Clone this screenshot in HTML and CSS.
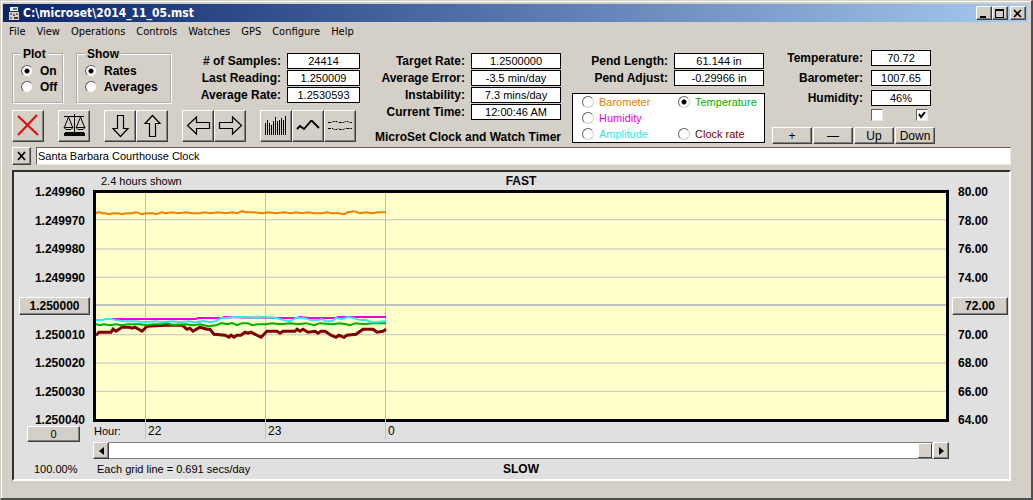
FILE: index.html
```html
<!DOCTYPE html>
<html lang="en">
<head>
    <meta charset="utf-8">
    <title>C:\microset\2014_11_05.mst</title>
    <meta name="viewport" content="width=device-width, initial-scale=1.0">
    <link rel="stylesheet" href="styles.css">
</head>
<body>
    <div class="window">
        <header class="titlebar">
            <svg class="app-icon" width="10" height="14" viewBox="0 0 10 14">
                <rect width="10" height="14" fill="#1c2c3c"/>
                <rect x="1" y="1" width="8" height="4" fill="#e8f4f8"/>
                <rect x="4" y="2" width="4" height="2" fill="#3c8c8c"/>
                <path d="M0 6h10v8H0z" fill="#d8d4c8"/>
                <path d="M1 7h2v2H1zM7 7h2v2H7zM1 11h2v2H1z" fill="#807868"/>
                <path d="M4 8h2v2H4z" fill="#c04030"/>
                <path d="M5 11h4v2H5z" fill="#403c38"/>
            </svg>
            <h1>C:\microset\2014_11_05.mst</h1>
            <div class="window-buttons">
                <button type="button" aria-label="Minimize"><svg width="12" height="11" viewBox="0 0 12 11"><path d="M2 8h6v2H2z"/></svg></button>
                <button type="button" aria-label="Maximize"><svg width="12" height="11" viewBox="0 0 12 11"><path d="M1 1h9v9H1zM2 3v6h7V3z" fill-rule="evenodd"/></svg></button>
                <button type="button" class="close" aria-label="Close"><svg width="12" height="11" viewBox="0 0 12 11"><path d="M2 2l7 7M9 2l-7 7" stroke="#000" stroke-width="1.6"/></svg></button>
            </div>
        </header>

        <nav class="menu">
            <a href="#">File</a>
            <a href="#">View</a>
            <a href="#">Operations</a>
            <a href="#">Controls</a>
            <a href="#">Watches</a>
            <a href="#">GPS</a>
            <a href="#">Configure</a>
            <a href="#">Help</a>
        </nav>

        <div class="controls">
            <div class="group group-main">
                <div class="group-row">
                    <fieldset class="plot-set">
                        <legend>Plot</legend>
                        <label><input type="radio" name="plot" checked>On</label>
                        <label><input type="radio" name="plot">Off</label>
                    </fieldset>
                    <fieldset class="show-set">
                        <legend>Show</legend>
                        <label><input type="radio" name="show" checked>Rates</label>
                        <label><input type="radio" name="show">Averages</label>
                    </fieldset>
                    <div class="readouts">
                        <label for="samples"># of Samples:</label><output id="samples">24414</output>
                        <label for="last">Last Reading:</label><output id="last">1.250009</output>
                        <label for="avgrate">Average Rate:</label><output id="avgrate">1.2530593</output>
                    </div>
                </div>
                <div class="toolbar">
                    <div class="tools">
                        <button type="button" aria-label="Clear"><svg width="28" height="28" viewBox="0 0 28 28"><path d="M4 4l20 19M23 3L4 23" fill="none" stroke="#e01010" stroke-width="2.2"/></svg></button>
                    </div>
                    <div class="tools">
                        <button type="button" aria-label="Balance"><svg width="28" height="28" viewBox="0 0 28 28"><path d="M4 4.500h20M14.500 2v18M8.500 5l-4 10M8.500 5l4 10M20.500 5l-4 10M20.500 5l4 10" fill="none" stroke="#000"/><path d="M4 15.500h9l-2 2H6zM16 15.500h9l-2 2h-5z" fill="none" stroke="#000"/><path d="M5 20h19v1h1v3H4v-3h1z"/></svg></button>
                    </div>
                    <div class="tools">
                        <button type="button" aria-label="Scale down"><svg width="28" height="28" viewBox="0 0 28 28"><path d="M11.500 3.500h6v13h4.500L14.500 24.500 7 16.500h4.500z" fill="none" stroke="#000" stroke-width="1.2"/></svg></button>
                        <button type="button" aria-label="Scale up"><svg width="28" height="28" viewBox="0 0 28 28"><path d="M11.500 24.500h6v-13h4.500L14.500 3.500 7 11.500h4.500z" fill="none" stroke="#000" stroke-width="1.2"/></svg></button>
                    </div>
                    <div class="tools">
                        <button type="button" aria-label="Back"><svg width="28" height="28" viewBox="0 0 28 28"><path d="M25.500 10.500v6h-13V22L3.500 13.500 12.500 5v5.500z" fill="none" stroke="#000" stroke-width="1.2"/></svg></button>
                        <button type="button" aria-label="Forward"><svg width="28" height="28" viewBox="0 0 28 28"><path d="M3.500 10.500v6h13V22l9-8.500L16.500 5v5.500z" fill="none" stroke="#000" stroke-width="1.2"/></svg></button>
                    </div>
                    <div class="tools">
                        <button type="button" aria-label="Bars"><svg width="28" height="28" viewBox="0 0 28 28"><path d="M3.500 23V11M5.500 23V8M7.500 23V11M9.500 23V13M11.500 23V9M13.500 23V5M15.500 23V9M17.500 23V8M19.500 23V6M21.500 23V8M23.500 23V4" stroke="#000"/></svg></button>
                        <button type="button" aria-label="Line"><svg width="28" height="28" viewBox="0 0 28 28"><path d="M3 17l3-3 4 3 7-8 1 0 7 7" fill="none" stroke="#000" stroke-width="1.8"/></svg></button>
                        <button type="button" aria-label="Traces"><svg width="28" height="28" viewBox="0 0 28 28"><path d="M2 10.500h4l1-1h4l1 1h6l1-1h3l1 1h3M2 16.500h5l1 1h3l1-1 2 1h4l1-1h7" fill="none" stroke="#000" stroke-dasharray="3 1"/></svg></button>
                    </div>
                </div>
            </div>

            <div class="group group-rate">
                <div class="readouts">
                    <label for="target">Target Rate:</label><output id="target">1.2500000</output>
                    <label for="error">Average Error:</label><output id="error">-3.5 min/day</output>
                    <label for="instability">Instability:</label><output id="instability">7.3 mins/day</output>
                    <label for="time">Current Time:</label><output id="time">12:00:46 AM</output>
                </div>
                <strong class="product">MicroSet Clock and Watch Timer</strong>
            </div>

            <div class="group group-pend">
                <div class="readouts">
                    <label for="length">Pend Length:</label><output id="length">61.144 in</output>
                    <label for="adjust">Pend Adjust:</label><output id="adjust">-0.29966 in</output>
                </div>
                <div class="series-picker">
                    <label class="barometer"><input type="radio" name="series">Barometer</label>
                    <label class="temperature"><input type="radio" name="series" checked>Temperature</label>
                    <label class="humidity"><input type="radio" name="series">Humidity</label>
                    <label class="amplitude"><input type="radio" name="series">Amplitude</label>
                    <label class="clock-rate"><input type="radio" name="series">Clock rate</label>
                </div>
            </div>

            <div class="group group-weather">
                <div class="readouts">
                    <label for="temp">Temperature:</label><output id="temp">70.72</output>
                    <label for="baro">Barometer:</label><output id="baro">1007.65</output>
                    <label for="humid">Humidity:</label><output id="humid">46%</output>
                </div>
                <div class="checks">
                    <input type="checkbox" aria-label="Scale up">
                    <input type="checkbox" aria-label="Scale down" checked>
                </div>
                <div class="scale-buttons">
                    <button type="button">+</button>
                    <button type="button">—</button>
                    <button type="button">Up</button>
                    <button type="button">Down</button>
                </div>
            </div>
        </div>

        <div class="note">
            <button type="button" aria-label="Clear note"><svg width="10" height="10" viewBox="0 0 10 10"><path d="M1 1l7 8M8 1L1 9" stroke="#000" stroke-width="1.8"/></svg></button>
            <input type="text" aria-label="Note" value="Santa Barbara Courthouse Clock">
        </div>

        <main class="chart">
            <div class="chart-head">
                <span>2.4 hours shown</span>
                <strong>FAST</strong>
            </div>

            <div class="axis axis-left">
                <span>1.249960</span>
                <span>1.249970</span>
                <span>1.249980</span>
                <span>1.249990</span>
                <button type="button">1.250000</button>
                <span>1.250010</span>
                <span>1.250020</span>
                <span>1.250030</span>
                <span>1.250040</span>
            </div>

            <div class="plot">
                <svg viewBox="0 0 850 224" preserveAspectRatio="none">
                    <g class="grid">
                        <path d="M0 26.500H850M0 55.500H850M0 83.500H850M0 140.500H850M0 168.500H850M0 196.500H850"/>
                        <path d="M49.500 0V224M169.500 0V224M289.500 0V224"/>
                        <path class="mid" d="M0 111H850"/>
                    </g>
                    <polyline class="trace barometer" points="0,20 3,19 6,20 10,20 13,21 17,20 22,20 26,21 30,20 36,20 40,19 46,21 50,20 57,20 60,21 66,19 70,20 76,19 82,20 90,19 96,20 104,20 109,19 114,20 122,19 130,20 136,19 141,20 146,18 150,19 158,19 166,20 172,19 180,20 188,19 195,20 200,19 206,20 212,19 218,20 226,20 231,19 236,20 243,20 248,21 252,19 258,18 264,20 270,19 276,20 282,19 290,19"/>
                    <polyline class="trace humidity" points="16,125 30,125 60,125 100,125 102,124 126,124 128,123 186,124 200,124 204,123 214,124 240,124 242,123 290,123"/>
                    <polyline class="trace clock-rate" points="0,141 3,138 15,138 17,135 20,137 26,133 33,133 36,134 39,133 46,137 48,135 51,132 69,131 86,131 91,135 94,134 97,137 104,133 111,135 114,135 118,140 129,141 133,143 135,141 138,143 141,141 145,141 149,138 152,139 155,138 161,141 165,143 171,137 181,137 184,139 187,137 199,137 201,135 204,137 207,135 212,138 219,137 222,139 225,137 229,137 235,141 240,143 243,141 248,143 251,141 260,140 267,135 277,135 281,138 287,137 290,135"/>
                    <polyline class="trace temperature" points="0,130 4,131 8,130 14,131 20,130 26,131 32,130 44,130 50,131 58,130 66,130 71,129 76,131 90,130 97,131 104,130 112,132 120,131 126,129 131,130 136,129 141,131 146,129 152,129 156,131 162,130 170,130 176,129 184,130 194,129 202,130 210,129 218,131 224,129 236,130 244,129 250,130 254,131 260,129 268,130 276,129 290,129"/>
                    <polyline class="trace amplitude" points="0,126 6,126 10,125 15,125 20,126 28,127 40,127 48,128 60,127 66,128 76,127 84,128 92,127 100,128 108,127 114,128 120,127 125,124 131,124 136,123 150,123 160,124 166,123 180,124 188,126 194,127 200,124 208,124 215,126 222,126 226,125 230,127 236,127 240,124 246,125 252,123 258,124 264,126 270,126 276,128 290,127"/>
                </svg>
            </div>

            <div class="axis axis-right">
                <span>80.00</span>
                <span>78.00</span>
                <span>76.00</span>
                <span>74.00</span>
                <button type="button">72.00</button>
                <span>70.00</span>
                <span>68.00</span>
                <span>66.00</span>
                <span>64.00</span>
            </div>

            <button type="button" class="zero">0</button>
            <div class="hours">
                <span class="caption">Hour:</span>
                <span>22</span>
                <span>23</span>
                <span>0</span>
            </div>

            <div class="scroll">
                <button type="button" aria-label="Scroll left"><svg width="5" height="8" viewBox="0 0 5 8"><path d="M5 0v8L0 4z"/></svg></button>
                <input type="range" min="0" max="100" value="100" aria-label="Position">
                <button type="button" aria-label="Scroll right"><svg width="5" height="8" viewBox="0 0 5 8"><path d="M0 0v8l5-4z"/></svg></button>
            </div>

            <span class="percent">100.00%</span>
            <div class="chart-foot">
                <span>Each grid line = 0.691 secs/day</span>
                <strong>SLOW</strong>
            </div>
        </main>
    </div>
</body>
</html>
```

FILE: styles.css
```css
* {
    box-sizing: border-box;
}

body {
    margin: 0;
    background-color: #d4d0c8;
    color: #000;
    font-family: "Liberation Sans", Arial, sans-serif;
    font-size: 11px;
    line-height: 16px;
}

.window {
    display: flex;
    flex-direction: column;
    min-height: 100vh;
    padding: 3px 2px 17px 2px;
    border: 1px solid #d4d0c8;
    border-right: 2px solid #505050;
    border-bottom: 2px solid #505050;
    box-shadow: inset 1px 1px 0 #fff;
}

button {
    display: flex;
    align-items: center;
    justify-content: center;
    margin: 0;
    padding: 0;
    background-color: #d4d0c8;
    border: 1px solid;
    border-color: #fff #404040 #404040 #fff;
    border-radius: 0;
    box-shadow: inset -1px -1px 0 #808080;
    color: #000;
    font: inherit;
}

input {
    margin: 0;
    font: inherit;
}

/* title bar and menu */
.titlebar {
    display: flex;
    align-items: center;
    height: 18px;
    margin-right: 1px;
    padding: 0 2px 0 6px;
    background: linear-gradient(to right, #0a246a, #a6caf0);
}

.titlebar h1 {
    flex: 1;
    margin: 0 0 0 4px;
    color: #fff;
    font-family: "DejaVu Sans Condensed", "DejaVu Sans", sans-serif;
    font-size: 12px;
    font-weight: bold;
}

.window-buttons {
    display: flex;
}

.window-buttons button {
    width: 16px;
    height: 14px;
}

.window-buttons .close {
    margin-left: 2px;
}

.menu {
    display: flex;
    gap: 11px;
    padding: 2px 6px;
    font-family: "DejaVu Sans Condensed", "DejaVu Sans", sans-serif;
}

.menu a {
    color: #000;
    text-decoration: none;
}

/* readouts and buttons above the chart */
.controls {
    display: flex;
    height: 105px;
    padding: 5px 0 0 9px;
}

.group {
    display: flex;
    flex: none;
    flex-direction: column;
}

.group-main {
    width: 348px;
}

.group-row {
    display: flex;
    height: 63px;
}

fieldset {
    height: 57px;
    min-width: 0;
    margin: 0 12px 0 0;
    padding: 2px 7px 0;
    border: 2px groove #fff;
    font-size: 12px;
    font-weight: bold;
}

legend {
    padding: 0 2px;
    line-height: 14px;
}

fieldset label {
    display: flex;
    align-items: center;
    gap: 7px;
}

.plot-set {
    width: 52px;
}

.show-set {
    width: 96px;
}

.readouts {
    display: grid;
    grid-template-columns: 1fr 90px;
    grid-auto-rows: 16px;
    gap: 1px 6px;
    margin-top: 6px;
}

.readouts label {
    font-size: 12px;
    font-weight: bold;
    line-height: 16px;
    text-align: right;
    white-space: nowrap;
}

.readouts output {
    background-color: #fff;
    border: 1px solid #000;
    line-height: 14px;
    text-align: center;
}

.group-main .readouts {
    flex: 1;
    grid-template-columns: 1fr 73px;
}

.toolbar {
    display: flex;
    justify-content: space-between;
    padding-right: 4px;
}

.tools {
    display: flex;
}

.tools button {
    width: 32px;
    height: 32px;
}

.group-rate {
    width: 201px;
}

.product {
    margin-top: 9px;
    font-size: 12px;
    text-align: right;
    white-space: nowrap;
}

.group-pend {
    width: 204px;
    padding-left: 11px;
}

.group-pend .readouts {
    padding-right: 1px;
}

.series-picker {
    display: grid;
    grid-template-columns: 96px 1fr;
    margin-top: 7px;
    padding-left: 9px;
    background-color: #fff;
    border: 1px solid #000;
}

.series-picker label {
    display: flex;
    align-items: center;
    gap: 5px;
    white-space: nowrap;
}

.series-picker .humidity {
    grid-column: 1 / 3;
}

.barometer {
    color: #f08000;
}

.temperature {
    color: #00b000;
}

.humidity {
    color: #e800e8;
}

.amplitude {
    color: #30e8f0;
}

.clock-rate {
    color: #800000;
}

input[type="radio"] {
    flex: none;
    appearance: none;
    width: 12px;
    height: 12px;
    background-color: #fff;
    border: 1px solid;
    border-color: #606060 #d4d0c8 #d4d0c8 #606060;
    border-radius: 50%;
}

input[type="radio"]:checked {
    background-image: radial-gradient(circle, #000 2px, transparent 3px);
}

.group-weather {
    width: 170px;
    padding-left: 7px;
}

.group-weather .readouts {
    grid-template-columns: 1fr 60px;
    row-gap: 4px;
    column-gap: 8px;
    margin-top: 3px;
    padding-right: 4px;
}

.checks {
    display: flex;
    justify-content: space-between;
    width: 57px;
    margin: 3px 7px 6px auto;
}

.checks input {
    appearance: none;
    width: 12px;
    height: 12px;
    background-color: #fff;
    border: 1px solid;
    border-color: #606060 #e8e8e8 #e8e8e8 #606060;
}

.checks input:checked {
    background-image: url("data:image/svg+xml,%3Csvg xmlns='http://www.w3.org/2000/svg' viewBox='0 0 10 10'%3E%3Cpath d='M2 4l2 3 4-5' fill='none' stroke='%23000' stroke-width='2'/%3E%3C/svg%3E");
}

.scale-buttons {
    display: grid;
    grid-template-columns: repeat(4, 1fr);
    gap: 1px;
}

.scale-buttons button {
    height: 17px;
    font-size: 12px;
}

/* note line */
.note {
    display: flex;
    gap: 5px;
    margin: 0 18px 5px 9px;
}

.note button {
    width: 19px;
    height: 18px;
}

.note input {
    flex: 1;
    min-width: 0;
    height: 18px;
    padding: 0 1px;
    background-color: #fff;
    border: 1px solid;
    border-color: #606060 #e8e8e8 #e8e8e8 #606060;
}

/* chart */
.chart {
    display: grid;
    flex: 1;
    grid-template-columns: 79px 1fr 60px;
    grid-template-rows: 18px minmax(120px, 1fr) 20px 17px 20px;
    margin: 0 18px 0 9px;
    background-color: #e0e0e0;
    border: 2px solid;
    border-color: #303030 #fff #fff #303030;
}

.chart strong {
    font-size: 12px;
}

.chart-head,
.chart-foot {
    display: grid;
    grid-column: 2;
    grid-template-columns: 1fr auto 1fr;
    align-items: center;
}

.chart-head {
    padding: 0 8px;
}

.chart-foot {
    padding: 0 4px;
}

.axis {
    display: flex;
    flex-direction: column;
    justify-content: space-between;
    margin: -6px 0;
    font-size: 12px;
    font-weight: bold;
}

.axis button {
    height: 18px;
    margin: -1px 0;
    font-weight: bold;
}

.axis-left {
    grid-column: 1;
    padding: 0 3px 0 5px;
    text-align: right;
}

.axis-left span {
    padding-right: 5px;
}

.axis-right {
    padding: 0 1px 0 3px;
}

.axis-right span {
    padding-left: 6px;
}

.plot {
    min-height: 0;
    background-color: #ffffcc;
    border: 3px solid #000;
}

.plot svg {
    display: block;
    width: 100%;
    height: 100%;
}

.grid path {
    fill: none;
    stroke: #c0c0c0;
}

.grid .mid {
    stroke-width: 2;
}

.trace {
    fill: none;
    stroke: currentColor;
    stroke-width: 2;
    vector-effect: non-scaling-stroke;
}

.trace.clock-rate {
    stroke-width: 3;
}

.zero {
    grid-column: 1;
    width: 53px;
    height: 16px;
    margin: 4px 0 0 13px;
}

.hours {
    display: grid;
    grid-column: 2;
    grid-template-columns: 52fr 120fr 120fr 564fr;
    margin: -3px 0 3px;
}

.hours span {
    padding: 4px 0 0 2px;
    border-left: 1px solid #c0c0c0;
    font-size: 12px;
}

.hours .caption {
    padding-left: 1px;
    border: 0;
    font-size: 11px;
}

.scroll {
    display: flex;
    grid-column: 2;
}

.scroll button {
    flex: none;
    width: 16px;
}

.scroll input {
    flex: 1;
    appearance: none;
    min-width: 0;
    height: 17px;
    padding-right: 1px;
    background-color: #fff;
    border: solid #808080;
    border-width: 1px 0;
}

.scroll input::-webkit-slider-thumb {
    appearance: none;
    width: 14px;
    height: 15px;
    background-color: #d4d0c8;
    border: 1px solid;
    border-color: #fff #404040 #404040 #fff;
}

.percent {
    grid-column: 1;
    padding: 2px 0 0 20px;
}
```
